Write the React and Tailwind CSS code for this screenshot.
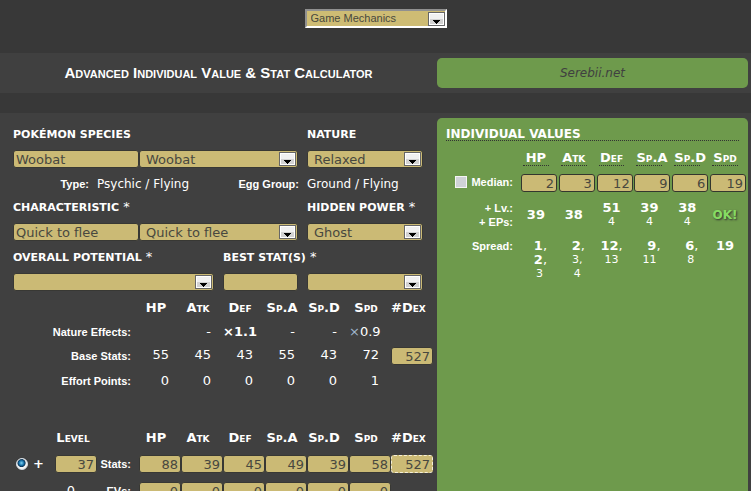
import React, { useState } from 'react';
import clsx from 'clsx';

const STAT_NAMES = ['HP', 'Atk', 'Def', 'Sp.A', 'Sp.D', 'Spd'];

const NATURE_EFFECTS = ['', '-', '×1.1', '-', '-', '×0.9'];
const BASE_STATS = [55, 45, 43, 55, 43, 72];
const EFFORT_POINTS = [0, 0, 0, 0, 0, 1];

const IV_NEXT = [
    { value: 39 }, { value: 38 }, { value: 51, eps: 4 },
    { value: 39, eps: 4 }, { value: 38, eps: 4 }, { ok: true },
];

// Possible IVs per stat, the likely ones are bold
const IV_SPREAD = [
    [{ v: '1', bold: true }, { v: '2', bold: true }, { v: '3' }],
    [{ v: '2', bold: true }, { v: '3' }, { v: '4' }],
    [{ v: '12', bold: true }, { v: '13' }],
    [{ v: '9', bold: true }, { v: '11' }],
    [{ v: '6', bold: true }, { v: '8' }],
    [{ v: '19', bold: true }],
];

const Arrow = () => (
    <svg className="absolute right-[2px] inset-y-0 my-auto pointer-events-none" width="17" height="14" viewBox="0 0 17 14" shapeRendering="crispEdges" aria-hidden="true">
        <rect width="17" height="14" fill="#666" />
        <rect x="1" y="1" width="15" height="12" fill="#fff" />
        <rect x="2" y="2" width="13" height="5" fill="#f0f0f0" />
        <rect x="2" y="7" width="13" height="5" fill="#d2d2d2" />
        <path d="M5 8h7v1h-1v1h-1v1h-1v1h-1v-1h-1v-1h-1v-1h-1z" fill="#000" />
    </svg>
);

const Select = ({ label, options, className, arrow = true }) => (
    <div className={clsx('relative', className)}>
        <select
            aria-label={label}
            className="block w-full h-[18px] pl-[6px] pt-px appearance-none rounded-[3px] border border-[#383834] bg-[#cbba75] text-[#48483f] text-[13px] leading-4"
        >
            {options.map((o) => <option key={o}>{o}</option>)}
        </select>
        {arrow && <Arrow />}
    </div>
);

const Heading = ({ children, className, note }) => (
    <h2 className={clsx('h-4 text-[11px] leading-4 font-bold uppercase whitespace-nowrap', className)}>
        {children}{note && <span className="text-[13px] font-normal"> *</span>}
    </h2>
);

const NumberInput = ({ label, value, className }) => (
    <input
        type="text"
        aria-label={label}
        defaultValue={value}
        className={clsx('block h-[18px] w-[42px] pr-[2px] text-right text-[13px] leading-4 rounded-[3px] border bg-[#cbba75] text-[#48483f]', className || 'border-[#383834]')}
    />
);

const StatHeader = ({ level }) => (
    <tr className="h-6 text-[13px] [font-variant:small-caps]">
        <td />
        <th className="font-bold pr-[6px]">{level && 'Level'}</th>
        <td />
        {STAT_NAMES.map((s) => <th key={s} className="font-bold pr-2">{s}</th>)}
        <th className="font-bold pr-2">#Dex</th>
    </tr>
);

const RowLabel = ({ children, span }) => (
    <th colSpan={span} className="pr-2 text-right whitespace-nowrap font-['Liberation_Sans',Arial,sans-serif] text-[11px] font-bold">
        {children}
    </th>
);

const Calculator = () => {
    const [species, setSpecies] = useState('Woobat');
    const [trait, setTrait] = useState('Quick to flee');

    return (
        <section className="pl-[13px] pt-[14px]">
            <div className="flex gap-[9px]">
                <Heading className="w-[285px]">Pokémon Species</Heading>
                <Heading>Nature</Heading>
            </div>
            <div className="flex gap-[9px] mt-[7px]">
                <div className="flex w-[285px]">
                    <input
                        type="text" aria-label="Species" value={species} onChange={(e) => setSpecies(e.target.value)}
                        className="h-[18px] w-[126px] pl-[2px] rounded-[3px] border border-[#383834] bg-[#cbba75] text-[#48483f] text-[13px] leading-4"
                    />
                    <Select label="Species list" options={['Woobat']} className="flex-1" />
                </div>
                <Select label="Nature" options={['Relaxed']} className="w-[116px]" />
            </div>

            <dl className="flex mt-2 leading-4 whitespace-nowrap">
                <dt className="w-[76px] text-right font-['Liberation_Sans',Arial,sans-serif] text-[11px] font-bold">Type:</dt>
                <dd className="w-[133px] pl-2 text-[12px]">Psychic / Flying</dd>
                <dt className="w-[77px] text-right font-['Liberation_Sans',Arial,sans-serif] text-[11px] font-bold">Egg Group:</dt>
                <dd className="pl-2 text-[12px]">Ground / Flying</dd>
            </dl>

            <div className="flex gap-[9px] mt-[7px]">
                <Heading className="w-[285px]" note>Characteristic</Heading>
                <Heading note>Hidden Power</Heading>
            </div>
            <div className="flex gap-[9px] mt-2">
                <div className="flex w-[285px]">
                    <input
                        type="text" aria-label="Characteristic" value={trait} onChange={(e) => setTrait(e.target.value)}
                        className="h-[18px] w-[126px] pl-[2px] rounded-[3px] border border-[#383834] bg-[#cbba75] text-[#48483f] text-[13px] leading-4"
                    />
                    <Select label="Characteristic list" options={['Quick to flee']} className="flex-1" />
                </div>
                <Select label="Hidden power" options={['Ghost']} className="w-[116px]" />
            </div>

            <div className="flex gap-[10px] mt-2">
                <Heading className="w-[200px]" note>Overall Potential</Heading>
                <Heading note>Best Stat(s)</Heading>
            </div>
            <div className="flex gap-[9px] mt-2">
                <Select label="Overall potential" options={['']} className="w-[201px]" />
                <Select label="Best stat" options={['']} className="w-[75px]" arrow={false} />
                <Select label="Other best stats" options={['']} className="w-[116px]" />
            </div>

            <table className="w-[420px] mt-[5px] table-fixed border-collapse text-[13px] leading-4">
                <tbody>
                    <StatHeader />
                    <tr className="h-[23px] text-right">
                        <RowLabel span={3}>Nature Effects:</RowLabel>
                        {NATURE_EFFECTS.map((n, i) => (
                            <td key={i} className={clsx('whitespace-nowrap', n === '×1.1' ? 'pr-[10px] font-bold' : 'pr-3')}>
                                {n === '×0.9' ? <><span className="text-[#9fb4cc]">×</span>0.9</> : n}
                            </td>
                        ))}
                        <td />
                    </tr>
                    <tr className="h-[26px] text-right">
                        <RowLabel span={3}>Base Stats:</RowLabel>
                        {BASE_STATS.map((n, i) => <td key={i} className="pr-3 pb-[2px]">{n}</td>)}
                        <td><NumberInput label="Base dex number" value="527" /></td>
                    </tr>
                    <tr className="h-6 text-right">
                        <RowLabel span={3}>Effort Points:</RowLabel>
                        {EFFORT_POINTS.map((n, i) => <td key={i} className="pr-3">{n}</td>)}
                        <td />
                    </tr>
                    <tr className="h-[33px]"><td colSpan={10} /></tr>
                    <StatHeader level />
                    <tr className="h-7">
                        <td>
                            <div className="flex items-center gap-[5px] pl-[3px]">
                                <input
                                    type="radio" aria-label="Use this level" defaultChecked
                                    className="size-3 appearance-none rounded-full border border-[#d8dde2] bg-[radial-gradient(circle_at_45%_40%,#7fd4f5_0,#1670a8_30%,#0c3556_45%,#f4f4f4_55%)]"
                                />
                                <span className="font-bold">+</span>
                            </div>
                        </td>
                        <td><NumberInput label="Level" value="37" /></td>
                        <RowLabel>Stats:</RowLabel>
                        {[88, 39, 45, 49, 39, 58].map((n, i) => (
                            <td key={i}><NumberInput label={`${STAT_NAMES[i]} stat`} value={n} /></td>
                        ))}
                        <td><NumberInput label="Dex number" value="527" className="border-dashed border-[#f5efd8]" /></td>
                    </tr>
                    <tr className="h-[26px]">
                        <td />
                        <td className="pr-[22px] text-right">0</td>
                        <RowLabel>EVs:</RowLabel>
                        {STAT_NAMES.map((s) => (
                            <td key={s}><NumberInput label={`${s} EVs`} value="0" /></td>
                        ))}
                        <td />
                    </tr>
                </tbody>
            </table>
        </section>
    );
};

const IndividualValues = () => (
    <section className="rounded-t-[5px] bg-[#6e9a4c] pt-[10px]">
        <h2 className="mx-[9px] text-[12px] leading-3 font-bold uppercase border-b border-dotted border-[#333]">Individual Values</h2>
        <table className="w-full table-fixed border-collapse text-[13px] leading-[14px]">
            <colgroup>
                <col className="w-[84px]" />
                {STAT_NAMES.map((s) => <col key={s} />)}
            </colgroup>
            <tbody>
                <tr className="h-[30px] [font-variant:small-caps]">
                    <td />
                    {STAT_NAMES.map((s) => (
                        <th key={s} className="pr-2 pt-1 font-bold">
                            <abbr className="block mx-[2px] no-underline border-b border-dotted border-[#333]">{s}</abbr>
                        </th>
                    ))}
                </tr>
                <tr className="h-6">
                    <RowLabel>
                        <label className="inline-flex items-center gap-1">
                            <input type="checkbox" className="size-3 appearance-none border border-[#f4f4f4] bg-[#cfd2d6]" />
                            Median:
                        </label>
                    </RowLabel>
                    {[2, 3, 12, 9, 6, 19].map((n, i) => (
                        <td key={i}>
                            <input
                                type="text" aria-label={`${STAT_NAMES[i]} median`} defaultValue={n}
                                className="block w-9 h-[18px] pr-[2px] text-right rounded-[3px] border border-[#33362e] bg-[#cbba75] text-[#48483f]"
                            />
                        </td>
                    ))}
                </tr>
                <tr className="h-10">
                    <RowLabel>+ Lv.:<br />+ EPs:</RowLabel>
                    {IV_NEXT.map((n, i) => (
                        <td key={i} className="pr-2 text-center">
                            {n.ok
                                ? <b className="text-[#86dc62] text-[12px] [text-shadow:1px_1px_2px_#333]">OK!</b>
                                : <b>{n.value}</b>}
                            {n.eps && <div className="text-[11px]">{n.eps}</div>}
                        </td>
                    ))}
                </tr>
                <tr>
                    <th className="pt-1 pr-2 text-right align-top font-['Liberation_Sans',Arial,sans-serif] text-[11px] font-bold">Spread:</th>
                    {IV_SPREAD.map((list, i) => (
                        <td key={i} className="pt-1 pr-2 text-center align-top">
                            {list.map((n, j) => (
                                <div key={n.v} className={n.bold ? 'text-[13px]' : 'text-[11px]'}>
                                    <span className={n.bold ? 'font-bold' : ''}>{n.v.padStart(2, '\u2007')}</span>
                                    {j < list.length - 1 && ','}
                                </div>
                            ))}
                        </td>
                    ))}
                </tr>
            </tbody>
        </table>
    </section>
);

const App = () => (
    <div className="min-h-screen bg-[#383838] text-white font-['DejaVu_Sans',Verdana,sans-serif]">
        <nav className="flex justify-center pt-[9px] pb-[25px]">
            <div className="relative">
                <select
                    aria-label="Section"
                    className="block w-[142px] h-[19px] pl-1 appearance-none border-2 border-t-[#909090] border-l-[#909090] border-r-white border-b-white bg-[#cebc74] text-[#48483f] font-['Liberation_Sans',Arial,sans-serif] text-[11px] leading-[15px]"
                >
                    <option>Game Mechanics</option>
                </select>
                <Arrow />
            </div>
        </nav>

        <header className="grid grid-cols-[437px_1fr] items-center h-10 pr-[3px] bg-[#404040]">
            <h1 className="text-center font-['Liberation_Sans',Arial,sans-serif] text-[15px] font-bold [font-variant:small-caps]">
                Advanced Individual Value &amp; Stat Calculator
            </h1>
            <a href="#serebii" className="flex items-center justify-center h-[30px] rounded-[5px] bg-[#6e9a4c] text-[#404040] text-[12px] italic">
                Serebii.net
            </a>
        </header>

        <main className="grid grid-cols-[437px_1fr] mt-5 pt-[5px] pr-[3px] bg-[#404040]">
            <div className="-mt-[5px]"><Calculator /></div>
            <IndividualValues />
        </main>
    </div>
);

export default App;
